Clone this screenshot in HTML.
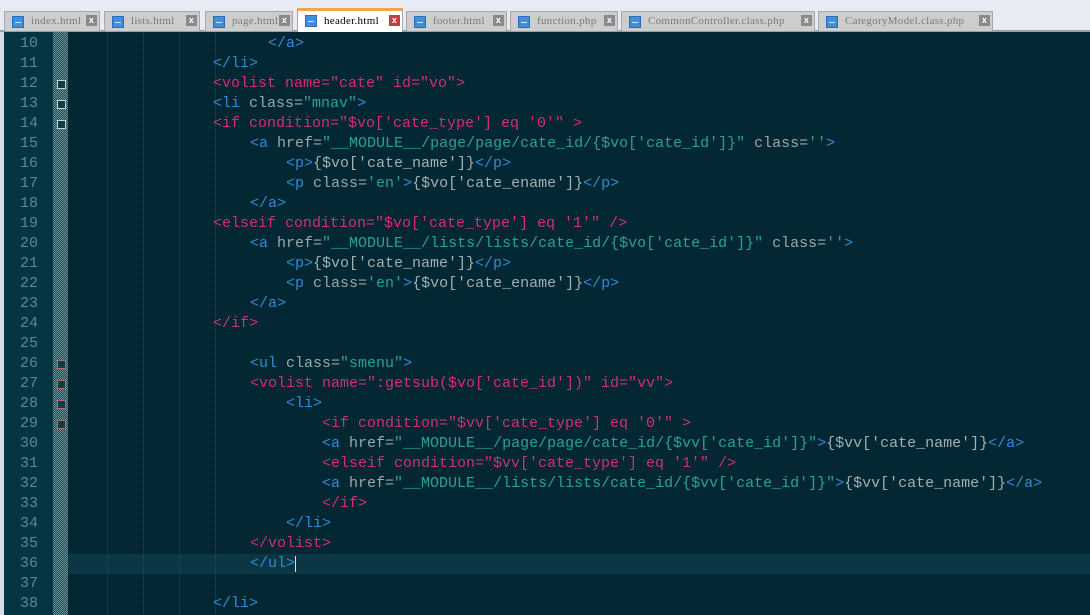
<!DOCTYPE html>
<html><head><meta charset="utf-8"><style>
*{margin:0;padding:0;box-sizing:border-box}
body{width:1090px;height:615px;overflow:hidden;background:#032833;position:relative;font-family:"Liberation Mono",monospace}
#top{position:absolute;left:0;top:0;width:1090px;height:32px;background:#e8ebf3;border-bottom:2px solid #9aa0a8}
.tab{position:absolute;top:11px;height:20px;background:#cdcdcd;border:1px solid #a8a8a8;border-bottom:none;font-family:"Liberation Serif","Noto Serif CJK SC",serif;font-size:11px;letter-spacing:0.3px;color:#7a7a7a;line-height:19px;padding-left:26px;white-space:nowrap;overflow:hidden}
.tab i{position:absolute;left:7px;top:4px;width:12px;height:12px;background:#3d8fe0;border:1px solid #2a6cb8}
.tab i:after{content:"";position:absolute;left:2px;top:5px;width:6px;height:1px;background:#cfe4f8}
.tab b{position:absolute;right:2px;top:3px;width:11px;height:11px;background:#8a8a8a;color:#fff;font:bold 9px/11px "Liberation Sans",sans-serif;text-align:center}
.tab.act{background:#fff;color:#000;border-top:3px solid #f2a54a;top:8px;height:24px;line-height:21px}
.tab.act b{background:#c04040;top:4px}
#frame{position:absolute;left:0;top:32px;width:4px;height:583px;background:#d6dce6}
#gut{position:absolute;left:4px;top:32px;width:49px;height:583px;background:#053442}
#fold{position:absolute;left:53px;top:32px;width:15px;height:583px;background:repeating-conic-gradient(#6f9296 0 25%,#1a4a53 0 50%) 0 0/2px 2px}
.g{position:absolute;top:32px;height:583px;width:0;border-left:1px dotted #1f4e5a}
#cur{position:absolute;left:68px;top:554px;width:1022px;height:20px;background:#0a3743}
.n{position:absolute;left:4px;width:34px;text-align:right;font-size:15px;line-height:20px;color:#5a8a96}
.l{position:absolute;font-size:15px;line-height:20px;white-space:pre;color:#a3b1b1}
.B{color:#2f8ad6}.P{color:#cf2f74}.A{color:#9aa8a8}.S{color:#2aa198}
.fb{position:absolute;left:57px;width:9px;height:9px;border:1px solid #c9d3d6;background:#0f3d47}
.fb.r{border-color:#c06070}
</style></head><body>
<div id="top"></div>
<div class="tab" style="left:4px;width:96px"><i></i>index.html<b>x</b></div>
<div class="tab" style="left:104px;width:96px"><i></i>lists.html<b>x</b></div>
<div class="tab" style="left:205px;width:88px"><i></i>page.html<b>x</b></div>
<div class="tab act" style="left:297px;width:106px"><i></i>header.html<b>x</b></div>
<div class="tab" style="left:406px;width:101px"><i></i>footer.html<b>x</b></div>
<div class="tab" style="left:510px;width:108px"><i></i>function.php<b>x</b></div>
<div class="tab" style="left:621px;width:194px"><i></i>CommonController.class.php<b>x</b></div>
<div class="tab" style="left:818px;width:175px"><i></i>CategoryModel.class.php<b>x</b></div>
<div id="frame"></div><div id="gut"></div><div id="fold"></div>
<div id="cur"></div>
<div class="g" style="left:107px"></div><div class="g" style="left:143px"></div><div class="g" style="left:179px"></div><div class="g" style="left:215px"></div>
<div class="n" style="top:34px">10</div><div class="n" style="top:54px">11</div><div class="n" style="top:74px">12</div><div class="n" style="top:94px">13</div><div class="n" style="top:114px">14</div><div class="n" style="top:134px">15</div><div class="n" style="top:154px">16</div><div class="n" style="top:174px">17</div><div class="n" style="top:194px">18</div><div class="n" style="top:214px">19</div><div class="n" style="top:234px">20</div><div class="n" style="top:254px">21</div><div class="n" style="top:274px">22</div><div class="n" style="top:294px">23</div><div class="n" style="top:314px">24</div><div class="n" style="top:334px">25</div><div class="n" style="top:354px">26</div><div class="n" style="top:374px">27</div><div class="n" style="top:394px">28</div><div class="n" style="top:414px">29</div><div class="n" style="top:434px">30</div><div class="n" style="top:454px">31</div><div class="n" style="top:474px">32</div><div class="n" style="top:494px">33</div><div class="n" style="top:514px">34</div><div class="n" style="top:534px">35</div><div class="n" style="top:554px">36</div><div class="n" style="top:574px">37</div><div class="n" style="top:594px">38</div>
<div class="fb" style="top:80px"></div><div class="fb" style="top:100px"></div><div class="fb" style="top:120px"></div>
<div class="fb r" style="top:360px"></div><div class="fb r" style="top:380px"></div><div class="fb r" style="top:400px"></div><div class="fb r" style="top:420px"></div>
<div class="l B" style="left:268px;top:34px">&lt;/a&gt;</div>
<div class="l B" style="left:213px;top:54px">&lt;/li&gt;</div>
<div class="l P" style="left:213px;top:74px">&lt;volist name="cate" id="vo"&gt;</div>
<div class="l" style="left:213px;top:94px"><span class="B">&lt;li</span> <span class="A">class=</span><span class="S">"mnav"</span><span class="B">&gt;</span></div>
<div class="l P" style="left:213px;top:114px">&lt;if condition="$vo['cate_type'] eq '0'" &gt;</div>
<div class="l" style="left:250px;top:134px"><span class="B">&lt;a</span> <span class="A">href=</span><span class="S">"__MODULE__/page/page/cate_id/{$vo['cate_id']}"</span> <span class="A">class=</span><span class="S">''</span><span class="B">&gt;</span></div>
<div class="l" style="left:286px;top:154px"><span class="B">&lt;p&gt;</span>{$vo['cate_name']}<span class="B">&lt;/p&gt;</span></div>
<div class="l" style="left:286px;top:174px"><span class="B">&lt;p</span> <span class="A">class=</span><span class="S">'en'</span><span class="B">&gt;</span>{$vo['cate_ename']}<span class="B">&lt;/p&gt;</span></div>
<div class="l B" style="left:250px;top:194px">&lt;/a&gt;</div>
<div class="l P" style="left:213px;top:214px">&lt;elseif condition="$vo['cate_type'] eq '1'" /&gt;</div>
<div class="l" style="left:250px;top:234px"><span class="B">&lt;a</span> <span class="A">href=</span><span class="S">"__MODULE__/lists/lists/cate_id/{$vo['cate_id']}"</span> <span class="A">class=</span><span class="S">''</span><span class="B">&gt;</span></div>
<div class="l" style="left:286px;top:254px"><span class="B">&lt;p&gt;</span>{$vo['cate_name']}<span class="B">&lt;/p&gt;</span></div>
<div class="l" style="left:286px;top:274px"><span class="B">&lt;p</span> <span class="A">class=</span><span class="S">'en'</span><span class="B">&gt;</span>{$vo['cate_ename']}<span class="B">&lt;/p&gt;</span></div>
<div class="l B" style="left:250px;top:294px">&lt;/a&gt;</div>
<div class="l P" style="left:213px;top:314px">&lt;/if&gt;</div>
<div class="l" style="left:250px;top:354px"><span class="B">&lt;ul</span> <span class="A">class=</span><span class="S">"smenu"</span><span class="B">&gt;</span></div>
<div class="l P" style="left:250px;top:374px">&lt;volist name=":getsub($vo['cate_id'])" id="vv"&gt;</div>
<div class="l B" style="left:286px;top:394px">&lt;li&gt;</div>
<div class="l P" style="left:322px;top:414px">&lt;if condition="$vv['cate_type'] eq '0'" &gt;</div>
<div class="l" style="left:322px;top:434px"><span class="B">&lt;a</span> <span class="A">href=</span><span class="S">"__MODULE__/page/page/cate_id/{$vv['cate_id']}"</span><span class="B">&gt;</span>{$vv['cate_name']}<span class="B">&lt;/a&gt;</span></div>
<div class="l P" style="left:322px;top:454px">&lt;elseif condition="$vv['cate_type'] eq '1'" /&gt;</div>
<div class="l" style="left:322px;top:474px"><span class="B">&lt;a</span> <span class="A">href=</span><span class="S">"__MODULE__/lists/lists/cate_id/{$vv['cate_id']}"</span><span class="B">&gt;</span>{$vv['cate_name']}<span class="B">&lt;/a&gt;</span></div>
<div class="l P" style="left:322px;top:494px">&lt;/if&gt;</div>
<div class="l B" style="left:286px;top:514px">&lt;/li&gt;</div>
<div class="l P" style="left:250px;top:534px">&lt;/volist&gt;</div>
<div class="l B" style="left:250px;top:554px">&lt;/ul&gt;</div>
<div style="position:absolute;left:295px;top:556px;width:1px;height:16px;background:#ddd"></div>
<div class="l B" style="left:213px;top:594px">&lt;/li&gt;</div>
</body></html>
